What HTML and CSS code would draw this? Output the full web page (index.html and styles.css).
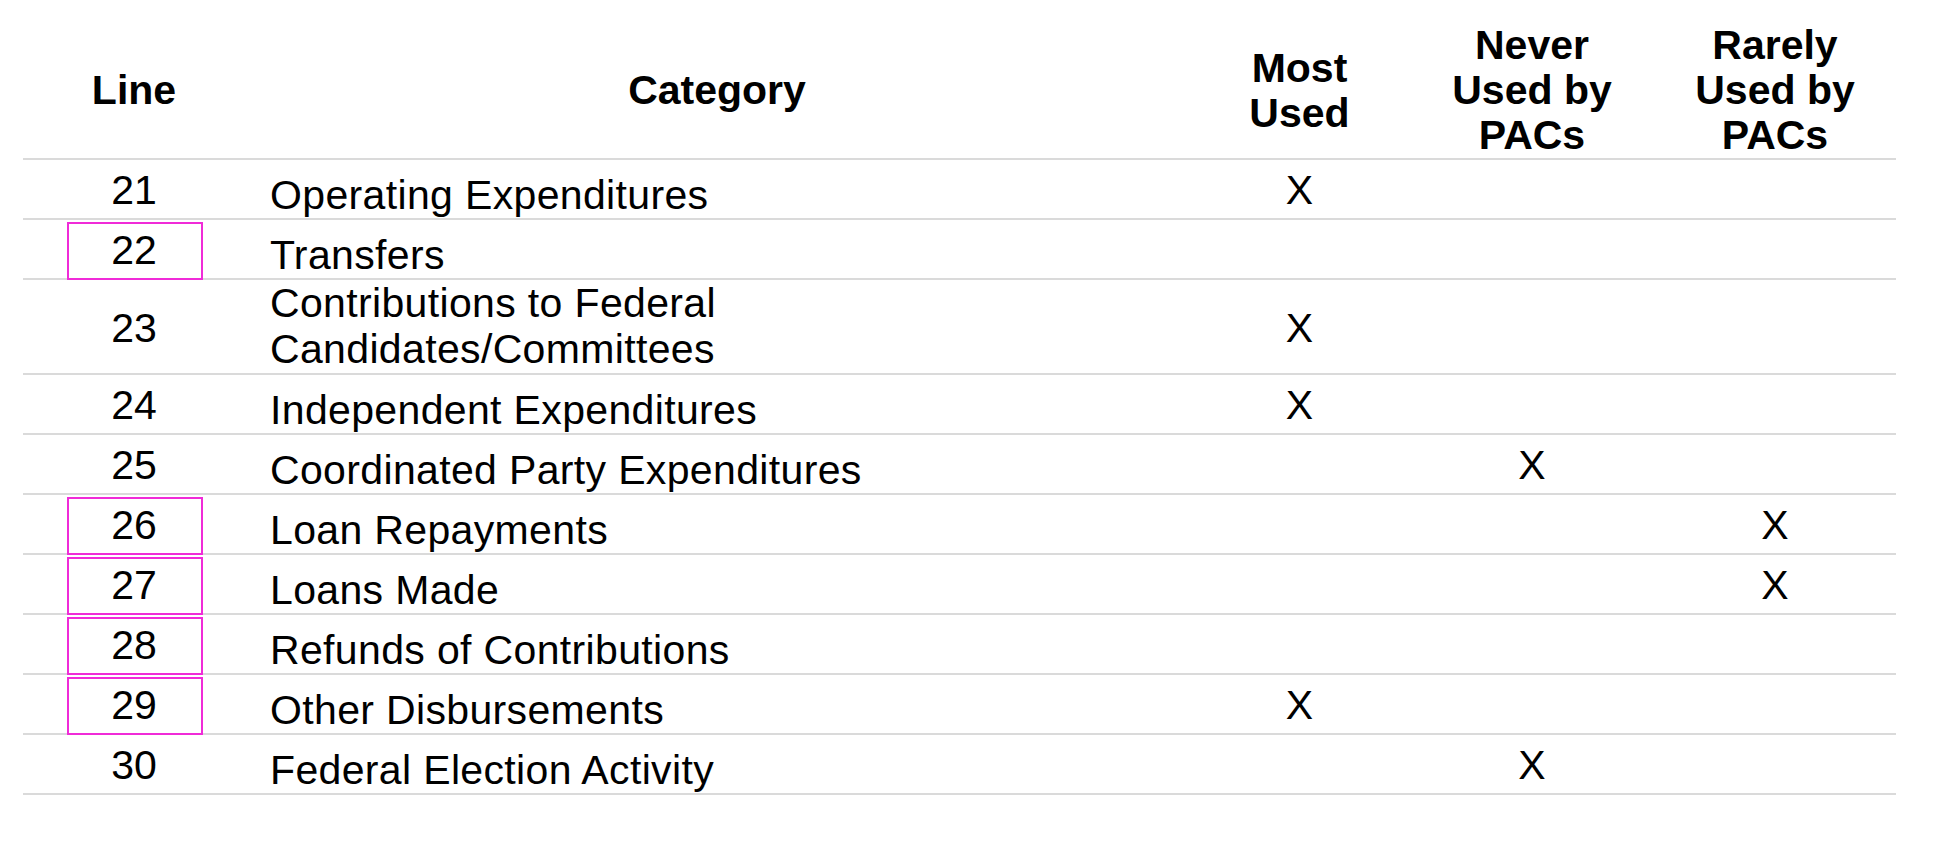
FILE: index.html
```html
<!DOCTYPE html>
<html lang="en">
<head>
<meta charset="utf-8">
<title>Disbursement Lines</title>
<link rel="stylesheet" href="styles.css">
</head>
<body>
<table class="lines">
  <colgroup>
    <col class="c-line">
    <col class="c-cat">
    <col class="c-most">
    <col class="c-never">
    <col class="c-rare">
  </colgroup>
  <thead>
    <tr>
      <th>Line</th>
      <th>Category</th>
      <th>Most<br>Used</th>
      <th>Never<br>Used by<br>PACs</th>
      <th>Rarely<br>Used by<br>PACs</th>
    </tr>
  </thead>
  <tbody>
    <tr><td class="num">21</td><td class="cat">Operating Expenditures</td><td class="mark">X</td><td class="mark"></td><td class="mark"></td></tr>
    <tr><td class="num hl">22</td><td class="cat">Transfers</td><td class="mark"></td><td class="mark"></td><td class="mark"></td></tr>
    <tr class="tall"><td class="num">23</td><td class="cat">Contributions to Federal<br>Candidates/Committees</td><td class="mark">X</td><td class="mark"></td><td class="mark"></td></tr>
    <tr><td class="num">24</td><td class="cat">Independent Expenditures</td><td class="mark">X</td><td class="mark"></td><td class="mark"></td></tr>
    <tr><td class="num">25</td><td class="cat">Coordinated Party Expenditures</td><td class="mark"></td><td class="mark">X</td><td class="mark"></td></tr>
    <tr><td class="num hl">26</td><td class="cat">Loan Repayments</td><td class="mark"></td><td class="mark"></td><td class="mark">X</td></tr>
    <tr><td class="num hl">27</td><td class="cat">Loans Made</td><td class="mark"></td><td class="mark"></td><td class="mark">X</td></tr>
    <tr><td class="num hl">28</td><td class="cat">Refunds of Contributions</td><td class="mark"></td><td class="mark"></td><td class="mark"></td></tr>
    <tr><td class="num hl">29</td><td class="cat">Other Disbursements</td><td class="mark">X</td><td class="mark"></td><td class="mark"></td></tr>
    <tr><td class="num">30</td><td class="cat">Federal Election Activity</td><td class="mark"></td><td class="mark">X</td><td class="mark"></td></tr>
  </tbody>
</table>
</body>
</html>
```

FILE: styles.css
```css
html, body {
  margin: 0;
  padding: 0;
  background: #ffffff;
}

body {
  font-family: "Liberation Sans", Arial, Helvetica, sans-serif;
  font-size: 41px;
  color: #000000;
}

.lines {
  table-layout: fixed;
  width: 1873px;
  margin-left: 23px;
  border-collapse: separate;
  border-spacing: 0;
}

.c-line { width: 222px; }
.c-cat { width: 944px; }
.c-most { width: 221px; }
.c-never { width: 244px; }
.c-rare { width: 242px; }

.lines th {
  font-weight: bold;
  text-align: center;
  vertical-align: middle;
  line-height: 45px;
  padding: 23px 0 0 0;
  border-bottom: 2px solid #dadada;
}

.lines td {
  line-height: 46px;
  border-bottom: 2px solid #dadada;
}

.num,
.mark {
  text-align: center;
  vertical-align: middle;
  padding: 7px 0 5px 0;
}

.cat {
  text-align: left;
  vertical-align: bottom;
  padding: 0 0 0 25px;
  letter-spacing: 0.35px;
}

.tall .cat {
  padding-bottom: 1px;
}

.num.hl {
  position: relative;
}

.num.hl::after {
  content: "";
  position: absolute;
  left: 44px;
  width: 136px;
  top: 2px;
  bottom: -2px;
  border: 2px solid #f02bd8;
  box-sizing: border-box;
}
```
